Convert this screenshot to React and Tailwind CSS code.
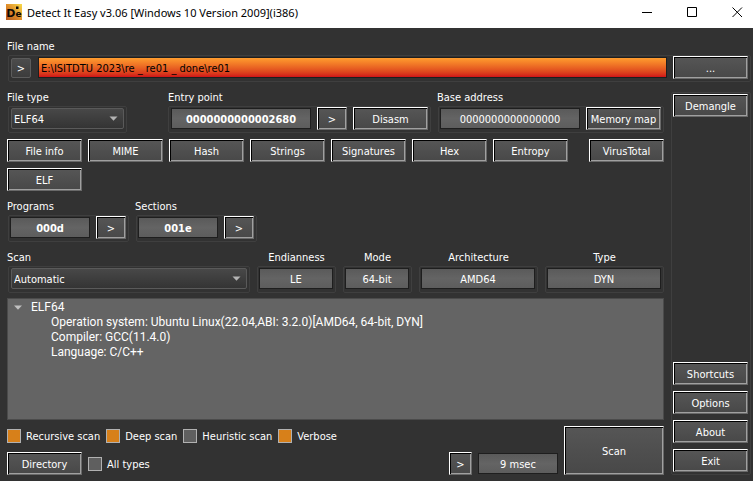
import React from 'react';

const Button = ({ className = 'w-[75px]', children, ...rest }) => (
  <button
    type="button"
    className={`h-[23px] shrink-0 border border-t-white border-l-white border-r-[#696969] border-b-[#696969] bg-linear-to-b from-[#565656] to-[#484848] pt-0.5 text-center leading-[16px] whitespace-nowrap text-white shadow-[inset_1px_1px_0_#000,inset_-1px_-1px_0_#a0a0a0] active:from-[#2d2d2d] active:to-[#2d2d2d] ${className}`}
    {...rest}
  >
    {children}
  </button>
);

const Value = ({ className = '', ...rest }) => (
  <input
    type="text"
    readOnly
    className={`h-[21px] min-w-0 border border-[#1e1e1e] bg-linear-to-b from-[#5a5a5a] via-[#646464] to-[#5d5d5d] pt-0.5 text-center leading-[16px] text-white outline-none ${className}`}
    {...rest}
  />
);

const Frame = ({ className = '', children }) => (
  <div className={`flex h-[27px] items-center gap-1.5 rounded-xs border border-[#3f3f3f] pb-0.5 ${className}`}>
    {children}
  </div>
);

const Caption = ({ className = '', ...rest }) => (
  <label className={`block h-[17px] pt-px leading-[16px] whitespace-nowrap ${className}`} {...rest} />
);

const Combo = ({ id, value, className = '' }) => (
  <div className={`relative ${className}`}>
    <select
      id={id}
      defaultValue={value}
      className="block h-[21px] w-full appearance-none rounded-xs border border-[#5a5a5a] bg-linear-to-b from-[#484848] to-[#343434] pt-0.5 pl-0.5 leading-[16px] text-white outline-none"
    >
      <option>{value}</option>
    </select>
    <svg className="pointer-events-none absolute top-2 right-1.5 h-[5px] w-[9px]" viewBox="0 0 9 5">
      <path d="M0.5 0.5h8L4.5 4.8z" fill="#b4b4b4" />
    </svg>
  </div>
);

const Check = ({ id, checked, children }) => (
  <label htmlFor={id} className="flex h-5 items-center gap-[5px] whitespace-nowrap">
    <input
      id={id}
      type="checkbox"
      defaultChecked={checked}
      className="size-3.5 shrink-0 appearance-none border border-[#b1b1b1] bg-[#5f5f5f] checked:bg-[#d7801a]"
    />
    <span className="pt-0.5">{children}</span>
  </label>
);

const Logo = () => (
  <svg className="size-4 shrink-0" viewBox="0 0 16 16" aria-hidden="true">
    <defs>
      <linearGradient id="logo" x1="0" y1="1" x2="1" y2="0">
        <stop offset="0" stopColor="#b5561c" />
        <stop offset="0.5" stopColor="#e08f2c" />
        <stop offset="1" stopColor="#f8dc4a" />
      </linearGradient>
    </defs>
    <rect width="16" height="16" fill="url(#logo)" />
    <text x="0.3" y="13" fontFamily="DejaVu Sans, sans-serif" fontWeight="700" fontSize="11" fill="#0c0804">
      D<tspan fontSize="9">e</tspan>
    </text>
    <rect x="10" y="2.5" width="2.5" height="2.5" fill="#0c0804" />
  </svg>
);

const tools = ['File info', 'MIME', 'Hash', 'Strings', 'Signatures', 'Hex', 'Entropy'];

const facts = [
  { id: 'endianness', label: 'Endianness', value: 'LE', width: 'w-[79px]' },
  { id: 'mode', label: 'Mode', value: '64-bit', width: 'w-[69px]' },
  { id: 'architecture', label: 'Architecture', value: 'AMD64', width: 'w-[119px]' },
  { id: 'type', label: 'Type', value: 'DYN', width: 'w-[119px]' },
];

const counters = [
  { id: 'programs', label: 'Programs', value: '000d' },
  { id: 'sections', label: 'Sections', value: '001e' },
];

export default function App() {
  return (
    <div className="flex min-h-screen flex-col bg-[#323232] font-['DejaVu_Sans_Condensed','Noto_Sans',sans-serif] text-[11px] leading-[16px] text-white">
      <header className="flex h-7 items-center bg-white pr-2.5 pb-1 pl-1.5 text-black">
        <Logo />
        <h1 className="ml-[5px] flex-1 pt-px font-['Noto_Sans',sans-serif] text-[11px] leading-[16px] whitespace-nowrap">
          Detect It Easy v3.06 [Windows 10 Version 2009](i386)
        </h1>
        <div className="flex gap-[34px]">
          <button type="button" aria-label="Minimize">
            <svg className="block size-[11px]" viewBox="0 0 11 11"><path d="M0 5.5h10" stroke="#000" /></svg>
          </button>
          <button type="button" aria-label="Maximize">
            <svg className="block size-[11px]" viewBox="0 0 11 11"><path d="M0.5 0.5h9v9h-9z" fill="none" stroke="#000" /></svg>
          </button>
          <button type="button" aria-label="Close">
            <svg className="block size-[11px]" viewBox="0 0 11 11"><path d="M0.5 0.5l9.5 9.5M10 0.5L0.5 10" stroke="#000" /></svg>
          </button>
        </div>
      </header>

      <main className="flex flex-1 flex-col pt-2.5 pr-0.5 pb-1.5 pl-[7px]">
        <div>
          <Caption htmlFor="file-name">File name</Caption>
          <Frame className="ml-px pr-0.5 pl-0.5">
            <button
              type="button"
              className="mr-px h-5 w-5 rounded-xs border border-[#5c5c5c] bg-linear-to-b from-[#4c4c4c] to-[#3c3c3c] pt-0.5 leading-[16px]"
            >
              &gt;
            </button>
            <input
              id="file-name"
              type="text"
              defaultValue="E:\ISITDTU 2023\re _ re01 _ done\re01"
              className="h-[21px] min-w-0 flex-1 border border-[#1e1e1e] bg-linear-to-b from-[#ff9c2e] to-[#d01018] px-0.5 pt-0.5 leading-[16px] text-black outline-none"
            />
            <Button>...</Button>
          </Frame>
        </div>

        <div className="flex flex-1 gap-[7px]">
          <div className="flex min-w-0 flex-1 flex-col pt-[7px]">
            <div className="flex">
              <div>
                <Caption htmlFor="file-type">File type</Caption>
                <Frame className="ml-px px-0.5">
                  <Combo id="file-type" value="ELF64" className="w-[113px]" />
                </Frame>
              </div>
              <div className="ml-auto">
                <Caption htmlFor="entry-point" className="pl-px">Entry point</Caption>
                <Frame className="ml-px px-0.5">
                  <Value id="entry-point" defaultValue="0000000000002680" className="w-[140px] font-bold" />
                  <Button className="w-[30px]">&gt;</Button>
                  <Button>Disasm</Button>
                </Frame>
              </div>
              <div className="ml-1.5">
                <Caption htmlFor="base-address">Base address</Caption>
                <Frame className="ml-px pr-0.5 pl-px">
                  <Value id="base-address" defaultValue="0000000000000000" className="w-[140px]" />
                  <Button>Memory map</Button>
                </Frame>
              </div>
            </div>

            <div className="mt-1.5 flex flex-wrap gap-1.5">
              {tools.map((name) => (
                <Button key={name}>{name}</Button>
              ))}
              <Button className="ml-auto w-[75px]">VirusTotal</Button>
              <Button>ELF</Button>
            </div>

            <div className="mt-[7px] flex gap-1.5">
              {counters.map(({ id, label, value }) => (
                <div key={id}>
                  <Caption htmlFor={id}>{label}</Caption>
                  <Frame className="ml-px pr-0.5 pl-px">
                    <Value id={id} defaultValue={value} className="w-20 font-bold" />
                    <Button className="w-[30px]">&gt;</Button>
                  </Frame>
                </div>
              ))}
            </div>

            <div className="mt-[7px] flex gap-[7px]">
              <div className="flex-1">
                <Caption htmlFor="scan-method">Scan</Caption>
                <Frame className="ml-px px-0.5">
                  <Combo id="scan-method" value="Automatic" className="w-full" />
                </Frame>
              </div>
              {facts.map(({ id, label, value, width }) => (
                <div key={id} className={width}>
                  <Caption htmlFor={id} className="text-center">{label}</Caption>
                  <Frame className="pr-0.5 pl-px">
                    <Value id={id} defaultValue={value} className="w-full" />
                  </Frame>
                </div>
              ))}
            </div>

            <section
              aria-label="Scan result"
              className="mt-[5px] min-h-[122px] flex-1 border border-[#4b4b4b] bg-[#646464] pt-px font-[Roboto,sans-serif] text-[12px] leading-[15px]"
            >
              <ul>
                <li>
                  <div className="flex items-center pl-1.5">
                    <svg className="mr-[9px] h-[5px] w-2" viewBox="0 0 8 5"><path d="M0 0.5h8L4 4.8z" fill="#c0c0c0" /></svg>
                    ELF64
                  </div>
                  <ul className="pl-[43px]">
                    <li>Operation system: Ubuntu Linux(22.04,ABI: 3.2.0)[AMD64, 64-bit, DYN]</li>
                    <li>Compiler: GCC(11.4.0)</li>
                    <li>Language: C/C++</li>
                  </ul>
                </li>
              </ul>
            </section>

            <div className="mt-1.5 flex gap-1.5">
              <div className="flex flex-1 flex-col gap-1.5">
                <div className="flex gap-1.5">
                  <Check id="recursive" checked>Recursive scan</Check>
                  <Check id="deep" checked>Deep scan</Check>
                  <Check id="heuristic">Heuristic scan</Check>
                  <Check id="verbose" checked>Verbose</Check>
                </div>
                <div className="flex items-center gap-1.5">
                  <Button>Directory</Button>
                  <Check id="all-types">All types</Check>
                  <Button className="ml-auto w-[23px]">&gt;</Button>
                  <Value aria-label="Elapsed time" defaultValue="9 msec" className="w-20" />
                </div>
              </div>
              <Button className="h-[49px] w-[100px]">Scan</Button>
            </div>
          </div>

          <aside className="mt-2.5 flex w-20 flex-col gap-1.5 rounded-xs border border-[#3f3f3f] pt-px pr-0.5 pb-0.5 pl-px">
            <Button>Demangle</Button>
            <Button className="mt-auto w-[75px]">Shortcuts</Button>
            <Button>Options</Button>
            <Button>About</Button>
            <Button>Exit</Button>
          </aside>
        </div>
      </main>
    </div>
  );
}
